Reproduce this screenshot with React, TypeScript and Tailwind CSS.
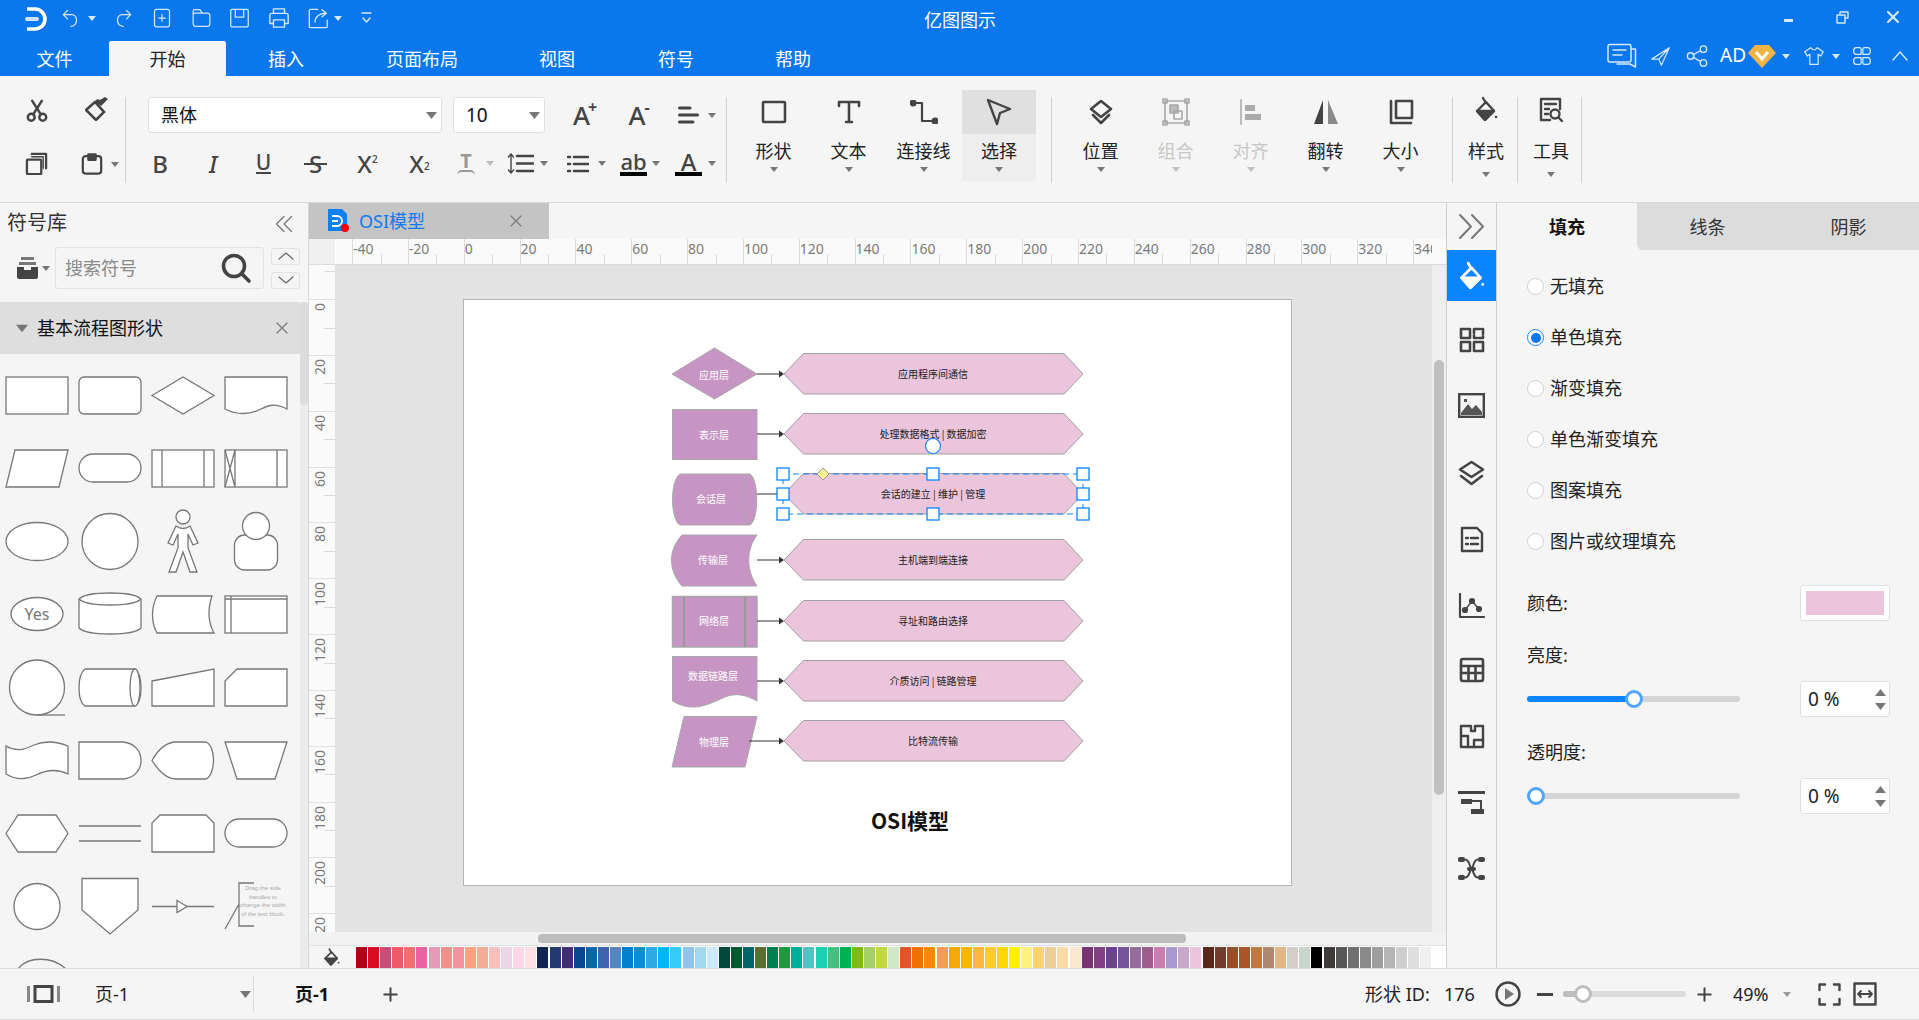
import type { ReactNode } from "react";

const swatches = [
  "#b10019", "#d80d25", "#c84f78", "#ed5a6a", "#ef7073", "#e864a0", "#e59ab8", "#ef928c", "#f4939e", "#ffa27f", "#f2ad97", "#f7c0bd", "#ead8e9", "#fdd7e6", "#fde0e6",
  "#112350", "#23396f", "#412c7a", "#0a478e", "#0368a5", "#3f64ad", "#5486c4", "#0280ce", "#0c8ece", "#2faae2", "#00b8f4", "#35caf7", "#8fc4ec", "#a2d9ef", "#ceeaf6",
  "#04483a", "#01592f", "#026565", "#5b6d31", "#007f50", "#1f9840", "#01ae9a", "#54c1c4", "#1bcfb0", "#47bd80", "#01b050", "#7fba10", "#a6cf66", "#c1d840", "#d1e8c8",
  "#e5532a", "#ef7106", "#f58b02", "#f59b5a", "#f4a904", "#ffb400", "#ffb83c", "#fecb2d", "#ffd700", "#fff000", "#fef17f", "#ffd36b", "#ecce96", "#fedaa6", "#fde7d0",
  "#7b3272", "#833f83", "#684095", "#75549b", "#956ba0", "#9f5c8f", "#ca7db0", "#a897d0", "#c7a8cc", "#ecc5dc",
  "#5b2618", "#743b2f", "#944f2b", "#ab5629", "#bf7a3f", "#b1886d", "#e0b887", "#d5cdc7", "#c9d4cc",
  "#000000", "#3e3a3a", "#575757", "#6f6f6f", "#898989", "#9f9f9f", "#b5b5b5", "#cecece", "#dfdfdf", "#f0f0f0",
];

const hRuler = [-40, -20, 0, 20, 40, 60, 80, 100, 120, 140, 160, 180, 200, 220, 240, 260, 280, 300, 320, 340];
const vRuler = [0, 20, 40, 60, 80, 100, 120, 140, 160, 180, 200, 20];

function Ic({ w = 24, h = 24, vb = "0 0 24 24", color = "#444", sw = 2.2, className = "", children }: { w?: number; h?: number; vb?: string; color?: string; sw?: number; className?: string; children: ReactNode }) {
  return (
    <svg width={w} height={h} viewBox={vb} fill="none" stroke={color} strokeWidth={sw} strokeLinecap="round" strokeLinejoin="round" className={`shrink-0 ${className}`}>
      {children}
    </svg>
  );
}

function Caret({ className = "", color = "#777", w = 8, h = 5 }: { className?: string; color?: string; w?: number; h?: number }) {
  return (
    <svg width={w} height={h} viewBox="0 0 8 5" className={`shrink-0 ${className}`}>
      <path d="M0 0H8L4 5Z" fill={color} />
    </svg>
  );
}

function Bucket({ color = "#444", w = 24, h = 26 }: { color?: string; w?: number; h?: number }) {
  return (
    <Ic w={w} h={h} vb="0 0 24 26" color={color} sw={2.4}>
      <path d="M9 2L12 7" />
      <path d="M12 6L20 15L11 24L3 15Z" />
      <path d="M3 15L20 15L11 24Z" fill={color} />
      <circle cx="22" cy="21" r="1.3" fill={color} stroke="none" />
    </Ic>
  );
}

function BigBtn({ label, icon, className = "", off = false, caretClass = "mt-[4px]", labelClass = "" }: { label: string; icon: ReactNode; className?: string; off?: boolean; caretClass?: string; labelClass?: string }) {
  return (
    <div className={`flex h-[91px] flex-col items-center ${className}`}>
      <div className="flex h-[44px] items-center justify-center">{icon}</div>
      <div className={`mt-[5px] text-[18px] leading-[24px] ${off ? "text-[#c8c8c8]" : "text-[#222]"} ${labelClass}`}>{label}</div>
      <Caret className={caretClass} color={off ? "#c0c0c0" : "#777"} />
    </div>
  );
}

function RibbonSep({ className = "" }: { className?: string }) {
  return <div className={`mt-[7px] h-[86px] w-px shrink-0 bg-[#d2d2d2] ${className}`} />;
}

function Glyph({ children, className = "" }: { children: ReactNode; className?: string }) {
  return <span className={`flex shrink-0 items-center justify-center font-medium leading-none text-[#444] ${className}`}>{children}</span>;
}

function Radio({ label, on = false }: { label: string; on?: boolean }) {
  return (
    <div className="flex h-[51px] items-center pl-[30px]">
      <span className={`flex h-[17px] w-[17px] items-center justify-center rounded-full border bg-white ${on ? "border-[#1a82ff]" : "border-[#cfcfcf]"}`}>
        {on && <span className="h-[10px] w-[10px] rounded-full bg-[#0a78ec]" />}
      </span>
      <span className="ml-[6px] text-[18px] text-[#222]">{label}</span>
    </div>
  );
}

function Spin() {
  return (
    <div className="flex h-[36px] w-[90px] shrink-0 items-center justify-between rounded-[3px] border border-[#e0e0e0] bg-white pl-[7px] pr-[3px]">
      <span className="text-[19px] text-[#222]">0 %</span>
      <div className="flex flex-col gap-[7px]">
        <Caret w={11} h={7} color="#777" className="rotate-180" />
        <Caret w={11} h={7} color="#777" />
      </div>
    </div>
  );
}

function Lib({ children }: { children: ReactNode }) {
  return (
    <svg width="73" height="73" viewBox="0 0 73 73" fill="#fff" stroke="#777" strokeWidth="1.3">
      {children}
    </svg>
  );
}

function Library() {
  return (
    <div className="grid grid-cols-[repeat(4,73px)] auto-rows-[73px] pt-[5px]">
      <Lib><rect x="6" y="18" width="62" height="37" /></Lib>
      <Lib><rect x="6" y="18" width="62" height="37" rx="5" /></Lib>
      <Lib><path d="M6 36.5L37 18L68 36.5L37 55Z" /></Lib>
      <Lib><path d="M6 18H68V50C56 44 50 46 42 50C30 56 18 56 6 50Z" /></Lib>

      <Lib><path d="M15 18H68L59 55H6Z" /></Lib>
      <Lib><rect x="6" y="22" width="62" height="28" rx="14" /></Lib>
      <Lib><rect x="6" y="18" width="62" height="37" /><path d="M16 18V55M58 18V55" /></Lib>
      <Lib><rect x="6" y="18" width="62" height="37" /><path d="M16 18V55M58 18V55M6 18L16 55M16 18L6 55" /></Lib>

      <Lib><ellipse cx="37" cy="36.5" rx="31" ry="19" /></Lib>
      <Lib><circle cx="37" cy="36.5" r="28" /></Lib>
      <Lib><circle cx="37" cy="12" r="7" /><path d="M30 21L22 38L27 40L32 29V43L23 67H30L37 47L44 67H51L42 43V29L47 40L52 38L44 21Q37 26 30 21Z" /></Lib>
      <Lib><rect x="15.5" y="30" width="43" height="35" rx="10" /><circle cx="37" cy="21" r="13.5" /></Lib>

      <Lib><ellipse cx="37" cy="36" rx="26" ry="16.5" /><text x="37" y="42" textAnchor="middle" fontSize="16" fill="#777" stroke="none" fontFamily="'Noto Sans',sans-serif">Yes</text></Lib>
      <Lib><path d="M6 21V50C14 58 60 58 68 50V21C60 13 14 13 6 21Z" /><path d="M6 21C14 29 60 29 68 21" /></Lib>
      <Lib><path d="M11 18H66C62 30 62 44 68 55H11C5 44 5 30 11 18Z" /></Lib>
      <Lib><rect x="6" y="18" width="62" height="37" /><path d="M12 18V55M6 21H68" /></Lib>

      <Lib><circle cx="37" cy="36.5" r="27.5" /><path d="M37 64H65" /></Lib>
      <Lib><path d="M12 18H62C70 24 70 50 62 55H12C4 50 4 24 12 18Z" /><ellipse cx="62" cy="36.5" rx="5" ry="18.5" /></Lib>
      <Lib><path d="M6 30L68 18V55H6Z" /></Lib>
      <Lib><path d="M18 18H68V55H6V30Z" /></Lib>

      <Lib><path d="M6 22C16 28 24 26 34 21C46 16 58 18 68 22V50C56 44 46 46 36 51C26 56 16 56 6 50Z" /></Lib>
      <Lib><path d="M6 18H50C74 20 74 53 50 55H6Z" /></Lib>
      <Lib><path d="M6 36.5C12 26 20 18 30 18H60C70 22 70 50 60 55H30C20 55 12 46 6 36.5Z" /></Lib>
      <Lib><path d="M6 18H68L56 55H18Z" /></Lib>

      <Lib><path d="M6 36.5L18 18H56L68 36.5L56 55H18Z" /></Lib>
      <Lib><path d="M6 29H68M6 44H68" /></Lib>
      <Lib><path d="M14 18H60L68 26V55H6V26Z" /></Lib>
      <Lib><rect x="6" y="22" width="62" height="28" rx="14" /></Lib>

      <Lib><circle cx="37" cy="36.5" r="23" /></Lib>
      <Lib><path d="M9 8.5H65V40L37 64L9 40Z" /></Lib>
      <Lib><path d="M6 36.5H68" /><path d="M31 30.5L41 36.5L31 42.5Z" /></Lib>
      <svg width="73" height="73" viewBox="0 0 73 73" fill="none" stroke="#777" strokeWidth="1.3">
        <path d="M35 13H20V56H35M20 34L6 59" />
        <g fill="#aaa" stroke="none" fontSize="6" textAnchor="middle" fontFamily="'Liberation Sans',sans-serif">
          <text x="44" y="20">Drag the side</text>
          <text x="44" y="29">handles to</text>
          <text x="44" y="37">change the width</text>
          <text x="44" y="46">of the text block.</text>
        </g>
      </svg>

      <Lib><path d="M18 26C28 13 52 13 66 26" fill="none" /></Lib>
    </div>
  );
}

const hexRows = [
  { y: 374, text: "应用程序间通信" },
  { y: 434, text: "处理数据格式 | 数据加密" },
  { y: 494, text: "会话的建立 | 维护 | 管理" },
  { y: 560, text: "主机端到端连接" },
  { y: 621, text: "寻址和路由选择" },
  { y: 681, text: "介质访问 | 链路管理" },
  { y: 741, text: "比特流传输" },
];

const nodeLabels = [
  { x: 714, y: 374, text: "应用层" },
  { x: 714, y: 434, text: "表示层" },
  { x: 711, y: 498, text: "会话层" },
  { x: 713, y: 559, text: "传输层" },
  { x: 714, y: 620, text: "网络层" },
  { x: 713, y: 675, text: "数据链路层" },
  { x: 714, y: 741, text: "物理层" },
];

const handles = [[783, 474], [933, 474], [1083, 474], [783, 494], [1083, 494], [783, 514], [933, 514], [1083, 514]];

function Diagram() {
  const fam = "'Noto Sans CJK SC',sans-serif";
  return (
    <svg width="829" height="587" viewBox="463 299 829 587" className="block">
      <g fill="#c795c4" stroke="#a8a8a8" strokeWidth="1">
        <path d="M672 374L714.5 348L757 374L714.5 399Z" />
        <rect x="672.5" y="409.5" width="84.5" height="50" />
        <path d="M680 474H750C759 480 759 519 750 525H680C670 519 670 480 680 474Z" />
        <path d="M750 474C741 480 741 519 750 525" fill="none" />
        <path d="M682 535H757C746 550 746 570 757 586H682C668 570 668 550 682 535Z" />
        <rect x="672.5" y="596.5" width="84.5" height="50.5" strokeWidth="1.5" />
        <path d="M684 597V647M745 597V647" stroke="#999" strokeWidth="2" />
        <path d="M672.5 656.5H757V701C745 694 735 693 725 697C712 703 703 707 693 707C684 707 678 704 672.5 701Z" />
        <path d="M684 716.5H757L745 767H672Z" />
      </g>
      <g stroke="#333" strokeWidth="1">
        <path d="M757 374H780M757 434H780M757 494H778M757 560H780M757 621H780M757 681H780M749 741H780" />
      </g>
      <g fill="#333">
        {[374, 434, 560, 621, 681, 741].map((y) => (
          <path key={y} d={`M779 ${y - 3.5}L784 ${y}L779 ${y + 3.5}Z`} />
        ))}
      </g>
      <g fill="#ebc5dc" stroke="#a0a0a0" strokeWidth="1">
        {[374, 434, 494, 560, 621, 681, 741].map((y) => (
          <path key={y} d={`M784 ${y}L803.5 ${y - 20.5}H1064L1083 ${y}L1064 ${y + 20}H803.5Z`} />
        ))}
      </g>
      <g fontSize="10" textAnchor="middle" dominantBaseline="central" fontFamily={fam}>
        {hexRows.map((r) => (
          <text key={r.y} x="933" y={r.y - 1} fill="#222">{r.text}</text>
        ))}
        {nodeLabels.map((n) => (
          <text key={n.text} x={n.x} y={n.y} fill="#fff">{n.text}</text>
        ))}
      </g>
      <rect x="783" y="474" width="300" height="40" fill="none" stroke="#0a84ff" strokeWidth="1" strokeDasharray="6 4" />
      <path d="M823 468L829 474L823 480L817 474Z" fill="#fdf58f" stroke="#999" />
      {handles.map(([x, y]) => (
        <rect key={`${x}-${y}`} x={x - 6} y={y - 6} width="12" height="12" fill="#fff" stroke="#0a84ff" strokeWidth="1.3" />
      ))}
      <circle cx="933" cy="446" r="7.5" fill="#fff" stroke="#1a82ff" strokeWidth="1.2" />
      <text x="910" y="820" textAnchor="middle" dominantBaseline="central" fontSize="21" fontWeight="700" fill="#111" fontFamily={fam}>OSI模型</text>
    </svg>
  );
}

export default function App() {
  const light = "#d6e8fc";
  return (
    <div className="flex h-[1020px] w-[1919px] flex-col overflow-hidden bg-[#f5f5f5] [font-family:'Noto_Sans','Noto_Sans_CJK_SC',sans-serif]">
      {/* title bar */}
      <div className="h-[76px] shrink-0 bg-[#0a78ec]">
        <div className="flex h-[41px] items-start">
          <svg width="22" height="24" viewBox="0 0 22 24" fill="none" className="ml-[25px] mt-[7px] shrink-0">
            <path d="M2 2H10A10 10 0 0 1 10 22H2" stroke="#fff" strokeWidth="3.6" />
            <path d="M2 12H12" stroke="#cfe4fb" strokeWidth="4" strokeLinecap="round" />
          </svg>
          <Ic w={20} h={20} color={light} sw={1.5} className="ml-[13px] mt-[8px]"><path d="M9 3L4 8L9 13M4 8H14C22 8 22 21 13 22" /></Ic>
          <Caret color={light} className="ml-[8px] mt-[16px]" />
          <Ic w={20} h={20} color={light} sw={1.5} className="ml-[18px] mt-[8px]"><path d="M15 3L20 8L15 13M20 8H10C2 8 2 21 11 22" /></Ic>
          <Ic w={20} h={20} color={light} sw={1.5} className="ml-[18px] mt-[8px]"><rect x="3" y="1.5" width="18" height="21" rx="2.5" /><path d="M12 8V16M8 12H16" /></Ic>
          <Ic w={23} h={20} color={light} sw={1.5} className="ml-[18px] mt-[8px]"><path d="M2 6V19Q2 22 5 22H19Q22 22 22 19V9Q22 6 19 6H2ZM2 6V4Q2 2 4 2H10L13 6" /></Ic>
          <Ic w={21} h={20} color={light} sw={1.5} className="ml-[16px] mt-[8px]"><path d="M3 1.5H21Q22.5 1.5 22.5 3V21Q22.5 22.5 21 22.5H3Q1.5 22.5 1.5 21V3Q1.5 1.5 3 1.5Z" /><path d="M7 2V11H17V2" /></Ic>
          <Ic w={24} h={22} color={light} sw={1.5} className="ml-[17px] mt-[7px]"><path d="M6 7V2H18V7M6 18H2V9Q2 7 4 7H20Q22 7 22 9V18H18M6 14H18V22H6Z" /></Ic>
          <Ic w={23} h={21} color={light} sw={1.5} className="ml-[16px] mt-[8px]"><path d="M22 14V21Q22 22.5 20 22.5H3Q1.5 22.5 1.5 21V3Q1.5 1.5 3 1.5H11M8 16C8 10 13 6 20 6M16 2L21 6L16 10" /></Ic>
          <Caret color={light} className="ml-[4px] mt-[16px]" />
          <Ic w={11} h={16} vb="0 0 11 16" color={light} sw={1.4} className="ml-[19px] mt-[11px]"><path d="M1 2H10M2 7L5.5 11L9 7" /></Ic>
          <div className="ml-[552px] mt-[7px] w-[72px] text-[18px] leading-[26px] text-white">亿图图示</div>
          <div className="ml-auto mr-[20px] flex items-start">
            <div className="mt-[19px] h-[3px] w-[9px] bg-[#d6e8fc]" />
            <Ic w={13} h={13} vb="0 0 13 13" color={light} sw={1.4} className="ml-[43px] mt-[11px]"><path d="M4 3V1H12V7H9" /><rect x="1" y="4" width="8" height="8" /></Ic>
            <Ic w={12} h={12} vb="0 0 12 12" color={light} sw={2.2} className="ml-[38px] mt-[11px]"><path d="M1 1L11 11M11 1L1 11" /></Ic>
          </div>
        </div>
        <div className="flex h-[35px] items-stretch text-[18px] text-white">
          <div className="flex w-[109px] items-center justify-center pt-px">文件</div>
          <div className="flex w-[117px] items-center justify-center rounded-t-[2px] bg-[#f5f5f5] pt-px text-[#222]">开始</div>
          <div className="flex w-[120px] items-center justify-center pt-px">插入</div>
          <div className="flex w-[152px] items-center justify-center pt-px">页面布局</div>
          <div className="flex w-[118px] items-center justify-center pt-px">视图</div>
          <div className="flex w-[120px] items-center justify-center pt-px">符号</div>
          <div className="flex w-[114px] items-center justify-center pt-px">帮助</div>
          <div className="ml-auto mr-[11px] flex items-center">
            <Ic w={30} h={26} vb="0 0 30 26" color={light} sw={1.5} className="mb-[6px]"><path d="M3 1.5H22Q24 1.5 24 3.5V17Q24 19 22 19H8L3 19Q1 19 1 17V3.5Q1 1.5 3 1.5ZM25 6H28.5V24L23 21H10M6 7H19M6 12H15" /></Ic>
            <Ic w={21} h={21} color={light} sw={1.4} className="mb-[5px] ml-[13px]"><path d="M22 2L2 15L10 15L13 22ZM22 2L10 15" /></Ic>
            <Ic w={22} h={22} color={light} sw={1.5} className="mb-[5px] ml-[15px]"><circle cx="5" cy="12" r="3.5" /><circle cx="19" cy="4.5" r="3.5" /><circle cx="19" cy="19.5" r="3.5" /><path d="M8 10.5L16 6M8 13.5L16 18" /></Ic>
            <span className="mb-[6px] ml-[12px] w-[28px] text-[19px] leading-none">AD</span>
            <svg width="28" height="24" viewBox="0 0 28 24" className="mb-[5px] shrink-0">
              <path d="M7 1H21L28 9L14 24L0 9Z" fill="#f2b544" />
              <path d="M8 8L14 15L20 8" fill="none" stroke="#fff" strokeWidth="3" />
            </svg>
            <Caret color={light} className="mb-[4px] ml-[6px]" />
            <Ic w={24} h={20} color={light} sw={1.5} className="mb-[5px] ml-[12px]"><path d="M8 2L1 7L4 12L7 10V22H17V10L20 12L23 7L16 2Q12 7 8 2Z" /></Ic>
            <Caret color={light} className="mb-[4px] ml-[6px]" />
            <Ic w={20} h={20} color={light} sw={1.5} className="mb-[5px] ml-[12px]"><path d="M5 2H9Q11 2 11 4V10H5Q2 10 2 6Q2 2 5 2ZM19 2H15Q13 2 13 4V10H19Q22 10 22 6Q22 2 19 2ZM5 22H9Q11 22 11 20V14H5Q2 14 2 18Q2 22 5 22ZM19 22H15Q13 22 13 20V14H19Q22 14 22 18Q22 22 19 22Z" /></Ic>
            <Ic w={16} h={10} vb="0 0 16 10" color={light} sw={1.4} className="mb-[6px] ml-[20px]"><path d="M1 9L8 1L15 9" /></Ic>
          </div>
        </div>
      </div>

      {/* ribbon */}
      <div className="flex h-[127px] shrink-0 items-start border-b border-[#d8d8d8] pt-[14px]">
        <div className="w-[125px] shrink-0">
          <div className="mt-[7px] flex h-[36px] items-start">
            <Ic w={24} h={23} sw={2.6} className="ml-[25px] mt-[2px]"><circle cx="6" cy="19" r="3.6" /><circle cx="18" cy="19" r="3.6" /><path d="M8 16L17 2M16 16L7 2" /></Ic>
            <svg width="24" height="24" viewBox="0 0 24 24" className="ml-[36px] shrink-0">
              <path d="M1 13L10 5L19 15L11 23Z" fill="none" stroke="#444" strokeWidth="2.6" />
              <path d="M10 5L16 9L23 2L20 0L15 3L12 2Z" fill="#444" />
            </svg>
          </div>
          <div className="mt-[19px] flex items-center">
            <Ic w={23} h={23} sw={2.4} className="ml-[25px]"><rect x="2" y="8" width="15" height="15" rx="1" /><path d="M7 2H22V17" /><path d="M7 5H19V17" strokeWidth="1.4" /></Ic>
            <Ic w={22} h={23} sw={2.4} className="ml-[33px]"><rect x="2" y="4" width="20" height="19" rx="3" /><path d="M8 8V2H16V8Z" fill="#444" /></Ic>
            <Caret className="ml-[8px] mt-[2px]" />
          </div>
        </div>
        <RibbonSep />
        <div className="w-[600px] shrink-0">
          <div className="mt-[7px] flex h-[36px] items-center">
            <div className="ml-[22px] flex h-[36px] w-[294px] shrink-0 items-center justify-between rounded-[3px] border border-[#e0e0e0] bg-white pl-[12px] pr-[4px] text-[18px] text-[#111]">
              <span>黑体</span>
              <Caret w={11} h={7} color="#777" />
            </div>
            <div className="ml-[11px] flex h-[36px] w-[92px] shrink-0 items-center justify-between rounded-[3px] border border-[#e0e0e0] bg-white pl-[12px] pr-[4px] text-[19px] text-[#111]">
              <span>10</span>
              <Caret w={11} h={7} color="#777" />
            </div>
            <Glyph className="ml-[28px] w-[24px] text-[26px]">A<sup className="-ml-[2px] text-[16px] font-bold">+</sup></Glyph>
            <Glyph className="ml-[30px] w-[24px] text-[26px]">A<sup className="-ml-[1px] text-[16px] font-bold">-</sup></Glyph>
            <Ic w={21} h={18} vb="0 0 21 18" sw={3} className="ml-[27px]"><path d="M1.5 2H12M1.5 9H19.5M1.5 16H15" /></Ic>
            <Caret className="ml-[9px]" />
          </div>
          <div className="mt-[19px] flex h-[23px] items-center">
            <Glyph className="ml-[26px] w-[16px] text-[24px]">B</Glyph>
            <Glyph className="ml-[37px] w-[16px] text-[24px] italic">I</Glyph>
            <span className="ml-[35px] flex w-[15px] shrink-0 flex-col items-center text-[21px] font-medium leading-[19px] text-[#444]">U<span className="h-[2px] w-[15px] bg-[#444]" /></span>
            <span className="relative ml-[33px] flex w-[23px] shrink-0 justify-center text-[24px] font-medium leading-none text-[#444]">S<span className="absolute left-0 top-[11px] h-[2px] w-[23px] bg-[#444]" /></span>
            <Glyph className="ml-[28px] w-[25px] text-[24px]">X<sup className="text-[10px]">2</sup></Glyph>
            <Glyph className="ml-[27px] w-[25px] text-[24px]">X<sub className="text-[10px]">2</sub></Glyph>
            <span className="relative ml-[25px] flex h-[23px] w-[18px] shrink-0 justify-center text-[20px] font-bold leading-[17px] text-[#999]">T<span className="absolute bottom-0 left-0 h-[5px] w-[18px] rounded-t-full border-t-2 border-[#999]" /></span>
            <Caret color="#bbb" className="ml-[11px]" />
            <Ic w={27} h={21} vb="0 0 27 21" sw={2.6} className="ml-[13px]"><path d="M4 1V20M1.5 4L4 1L6.5 4M1.5 17L4 20L6.5 17" strokeWidth="1.4" /><path d="M10 3H26M10 10.5H26M10 18H26" /></Ic>
            <Caret className="ml-[6px]" />
            <Ic w={22} h={18} vb="0 0 22 18" sw={2.6} className="ml-[19px]"><path d="M1 2H3M7 2H21M1 9H3M7 9H21M1 16H3M7 16H21" /></Ic>
            <Caret className="ml-[9px]" />
            <span className="ml-[14px] flex w-[27px] shrink-0 flex-col items-center text-[22px] font-medium leading-[19px] text-[#444]">ab<span className="mt-px h-[4px] w-[27px] bg-black" /></span>
            <Caret className="ml-[5px]" />
            <span className="ml-[15px] flex w-[27px] shrink-0 flex-col items-center text-[24px] font-medium leading-[19px] text-[#444]">A<span className="mt-px h-[4px] w-[27px] bg-black" /></span>
            <Caret className="ml-[6px]" />
          </div>
        </div>
        <RibbonSep />
        <div className="ml-[9px] flex">
          <BigBtn className="w-[75px]" label="形状" icon={<Ic w={26} h={24} vb="0 0 26 24" sw={2.6}><rect x="2" y="2" width="22" height="20" rx="1" /></Ic>} />
          <BigBtn className="w-[75px]" label="文本" icon={<Ic w={24} h={24} sw={2.6}><path d="M2 6V2H22V6M12 2V22M9 22H15" /></Ic>} />
          <BigBtn className="w-[75px]" label="连接线" icon={<Ic w={28} h={24} vb="0 0 28 24" sw={2.2}><circle cx="3" cy="3" r="2.4" fill="#444" /><circle cx="25" cy="21" r="2.4" fill="#444" /><path d="M5 3H12V21H23" /></Ic>} />
          <div className="relative ml-px h-[91px] w-[74px]">
            <div className="flex h-[44px] items-center justify-center bg-[#e0e0e0]">
              <Ic w={26} h={28} vb="0 0 26 28" sw={2.4}><path d="M2 2L24 11L14 15L11 26Z" /></Ic>
            </div>
            <div className="flex h-[47px] flex-col items-center bg-[#eeeeee] pt-[5px]">
              <div className="text-[18px] leading-[24px] text-[#222]">选择</div>
              <Caret className="mt-[4px]" />
            </div>
          </div>
        </div>
        <RibbonSep className="ml-[15px]" />
        <div className="ml-[11px] flex">
          <BigBtn className="w-[75px]" label="位置" icon={<Ic w={26} h={26} vb="0 0 26 26" sw={2.6}><path d="M13 2L23 10L13 18L3 10Z" /><path d="M5 16L13 24L21 16" /></Ic>} />
          <BigBtn className="w-[75px]" label="组合" off icon={<Ic w={28} h={28} vb="0 0 28 28" color="#a8a8a8" sw={1.6}><rect x="3" y="3" width="22" height="22" /><rect x="8" y="7" width="8" height="8" fill="#bbb" /><rect x="12" y="13" width="8" height="8" /><path d="M1 1H5V5H1ZM23 1H27V5H23ZM1 23H5V27H1ZM23 23H27V27H23Z" /></Ic>} />
          <BigBtn className="w-[75px]" label="对齐" off icon={<Ic w={24} h={26} vb="0 0 24 26" color="#bbb" sw={2}><path d="M2 1V25" /><rect x="6" y="6" width="10" height="6" fill="#aaa" stroke="none" /><rect x="6" y="15" width="16" height="6" fill="#aaa" stroke="none" /></Ic>} />
          <BigBtn className="w-[75px]" label="翻转" icon={<svg width="28" height="26" viewBox="0 0 28 26"><path d="M11 1L2 25H11Z" fill="#444" /><path d="M16 1L26 25H16Z" fill="#8a8a8a" /></svg>} />
          <BigBtn className="w-[75px]" label="大小" icon={<Ic w={26} h={26} vb="0 0 26 26" sw={2.6}><path d="M3 2V24H23" /><rect x="8" y="2" width="16" height="17" /></Ic>} />
        </div>
        <RibbonSep className="ml-[14px]" />
        <BigBtn className="ml-[9px] w-[48px]" label="样式" caretClass="mt-[9px]" labelClass="-mt-px" icon={<div className="-mt-[7px]"><Bucket /></div>} />
        <RibbonSep className="ml-[7px]" />
        <BigBtn className="ml-[9px] w-[48px]" label="工具" caretClass="mt-[9px]" labelClass="-mt-px" icon={<div className="-mt-[5px]"><Ic w={26} h={26} vb="0 0 26 26" sw={2.4}><path d="M12 23H3V2H22V12" /><path d="M7 7H18M7 12H11M7 17H10" /><circle cx="17" cy="17" r="4.5" /><path d="M20.5 20.5L24 24" /></Ic></div>} />
        <RibbonSep className="ml-[6px]" />
      </div>

      {/* body */}
      <div className="flex h-[765px] shrink-0 overflow-hidden">
        {/* symbol library */}
        <div className="flex w-[309px] shrink-0 flex-col border-r border-[#d8d8d8]">
          <div className="flex h-[44px] shrink-0 items-center justify-between pb-[4px] pl-[7px] pr-[14px]">
            <span className="text-[20px] text-[#333]">符号库</span>
            <Ic w={20} h={20} color="#777" sw={1.5} className="mt-[2px]"><path d="M12 3L3 12L12 21M21 3L12 12L21 21" /></Ic>
          </div>
          <div className="flex h-[42px] shrink-0 items-center">
            <svg width="21" height="22" viewBox="0 0 21 22" className="ml-[17px] shrink-0">
              <path d="M4 0H17V3H4ZM2 5H19V8H2Z" fill="#777" />
              <path d="M0 10H21V20Q21 22 19 22H2Q0 22 0 20ZM7 10V13H14V10Z" fill="#444" />
            </svg>
            <Caret className="ml-[4px]" />
            <div className="ml-[5px] flex h-[42px] w-[209px] shrink-0 items-center justify-between rounded-[3px] border border-[#e2e2e2] pl-[9px] pr-[11px]">
              <span className="text-[18px] text-[#8a8a8a]">搜索符号</span>
              <Ic w={32} h={32} vb="0 0 32 32" color="#444" sw={3.6}><circle cx="14" cy="14" r="10.5" /><path d="M22 22L29 29" /></Ic>
            </div>
            <div className="ml-[7px] flex flex-col gap-[7px]">
              <div className="flex h-[17px] w-[29px] items-center justify-center rounded-[3px] border border-[#e2e2e2]">
                <Ic w={16} h={8} vb="0 0 16 8" color="#666" sw={1.2}><path d="M1 7L8 1L15 7" /></Ic>
              </div>
              <div className="flex h-[17px] w-[29px] items-center justify-center rounded-[3px] border border-[#e2e2e2]">
                <Ic w={16} h={8} vb="0 0 16 8" color="#666" sw={1.2}><path d="M1 1L8 7L15 1" /></Ic>
              </div>
            </div>
          </div>
          <div className="mt-[13px] flex min-h-0 flex-1">
            <div className="w-[300px] shrink-0 overflow-hidden">
              <div className="flex h-[52px] items-center bg-[#dedede]">
                <Caret w={12} h={9} color="#777" className="ml-[16px]" />
                <span className="ml-[9px] text-[18px] text-[#111]">基本流程图形状</span>
                <Ic w={12} h={12} color="#777" sw={2.4} className="ml-auto mr-[12px]"><path d="M2 2L22 22M22 2L2 22" /></Ic>
              </div>
              <Library />
            </div>
            <div className="flex-1 bg-[#ececec]">
              <div className="h-[103px] rounded-[4px] bg-[#dcdcdc]" />
            </div>
          </div>
        </div>

        {/* centre */}
        <div className="flex w-[1137px] shrink-0 flex-col">
          <div className="flex h-[36px] shrink-0">
            <div className="flex w-[240px] items-center bg-[#c4c4c4] pl-[18px]">
              <svg width="22" height="24" viewBox="0 0 22 24" className="shrink-0">
                <path d="M1 0H15L20 5V22H1Z" fill="#0f80f0" />
                <path d="M5 7H10A5 5 0 0 1 10 17H5M5 12H11" fill="none" stroke="#fff" strokeWidth="1.8" />
                <circle cx="18" cy="19" r="4" fill="#f40000" />
              </svg>
              <span className="ml-[10px] text-[18px] text-[#0f7bf0]">OSI模型</span>
              <Ic w={12} h={12} color="#777" sw={2.2} className="ml-auto mr-[27px]"><path d="M2 2L22 22M22 2L2 22" /></Ic>
            </div>
          </div>
          <div className="flex h-[26px] shrink-0 border-b border-[#dcdcdc] bg-[#fafafa]">
            <div className="w-[26px] shrink-0 bg-[#f0f0f0]" />
            <div className="flex w-[1097px] shrink-0 overflow-hidden">
              <div className="relative w-[17px] shrink-0" />
              {hRuler.map((n) => (
                <div key={n} className="relative w-[55.85px] shrink-0 overflow-hidden border-l border-[#dcdcdc] text-[14px] leading-[20px] text-[#7a7a7a]">
                  {n}
                  <span className="absolute bottom-0 left-[27.5px] h-[10px] w-px bg-[#dcdcdc]" />
                </div>
              ))}
            </div>
          </div>
          <div className="flex h-[667px] shrink-0">
            <div className="w-[26px] shrink-0 overflow-hidden bg-[#fafafa]">
              <div className="relative h-[34px]">
                <span className="absolute right-0 top-[6px] h-px w-[11px] bg-[#dcdcdc]" />
              </div>
              {vRuler.map((n, i) => (
                <div key={i} className="relative h-[55.85px] border-t border-[#e0e0e0] pl-[2px] pt-[3px]">
                  <span className="block rotate-180 text-[14px] leading-[18px] text-[#7a7a7a] [writing-mode:vertical-rl]">{n}</span>
                  <span className="absolute right-0 top-[27.5px] h-px w-[11px] bg-[#dcdcdc]" />
                </div>
              ))}
            </div>
            <div className="w-[1097px] shrink-0 overflow-hidden bg-[#e3e3e3] pl-[128px] pt-[34px]">
              <div className="h-[587px] w-[829px] border border-[#b4b4b4] bg-white">
                <div className="-ml-px -mt-px">
                  <Diagram />
                </div>
              </div>
            </div>
            <div className="w-[14px] shrink-0 bg-[#eeeeee] pl-[2px] pt-[95px]">
              <div className="h-[435px] w-[10px] rounded-[5px] bg-[#c0c0c0]" />
            </div>
          </div>
          <div className="flex h-[13px] shrink-0 items-center bg-[#f2f2f2] pl-[229px]">
            <div className="h-[9px] w-[648px] rounded-[4px] bg-[#bdbdbd]" />
          </div>
          <div className="flex h-[23px] shrink-0 items-center border-t border-[#e2e2e2] bg-white">
            <div className="flex h-[22px] w-[47px] shrink-0 items-center bg-[#f5f5f5] pl-[14px]">
              <Bucket w={17} h={20} />
            </div>
            <div className="flex h-[21px]">
              {swatches.map((c, i) => (
                <div key={i} className="mr-[1.1px] h-[21px] w-[11px] shrink-0" style={{ backgroundColor: c }} />
              ))}
            </div>
          </div>
        </div>

        {/* icon strip */}
        <div className="flex w-[51px] shrink-0 flex-col items-stretch border-x border-[#d0d0d0]">
          <div className="flex h-[47px] shrink-0 items-center justify-center">
            <Ic w={28} h={27} vb="0 0 28 27" color="#777" sw={2}><path d="M2 2L13 13.5L2 25M14 2L25 13.5L14 25" /></Ic>
          </div>
          <div className="flex h-[51px] shrink-0 items-center justify-center bg-[#0a84ff]">
            <Bucket color="#fff" w={27} h={29} />
          </div>
          <div className="flex flex-col items-center">
            <Ic w={26} h={26} vb="0 0 26 26" sw={2.6} className="mt-[26px]"><rect x="2" y="2" width="9" height="9" /><rect x="15" y="2" width="9" height="9" strokeDasharray="6 2" /><rect x="2" y="15" width="9" height="9" /><rect x="15" y="15" width="9" height="9" /></Ic>
            <svg width="27" height="25" viewBox="0 0 27 25" className="mt-[40px] shrink-0"><rect x="1.2" y="1.2" width="24.6" height="22.6" fill="none" stroke="#444" strokeWidth="2.4" /><path d="M3 20L10 11L14 16L18 12L24 19V22H3Z" fill="#555" /><rect x="6" y="6" width="3" height="3" fill="#555" /></svg>
            <Ic w={27} h={26} vb="0 0 27 26" sw={2.6} className="mt-[42px]"><path d="M13.5 2L25 9.5L13.5 17L2 9.5Z" /><path d="M3 16L13.5 24L24 16" /></Ic>
            <Ic w={24} h={27} vb="0 0 24 27" sw={2.4} className="mt-[40px]"><path d="M2 2H17L22 7V25H2Z" /><path d="M6 12H8M11 12H18M6 18H8M11 18H18" /></Ic>
            <Ic w={27} h={26} vb="0 0 27 26" sw={2.2} className="mt-[40px]"><path d="M2 1V24H26" /><path d="M7 17L14 8L21 16" strokeWidth="1.4" /><circle cx="7" cy="17" r="2" fill="#444" /><circle cx="14" cy="8" r="2" fill="#444" /><circle cx="21" cy="16" r="2" fill="#444" /></Ic>
            <Ic w={26} h={26} vb="0 0 26 26" sw={2.6} className="mt-[38px]"><rect x="2" y="2" width="22" height="22" rx="2" /><path d="M2 9H24M2 16H24M9.5 9V24M16.5 9V24" /></Ic>
            <Ic w={26} h={25} vb="0 0 26 25" sw={2.4} className="mt-[41px]"><path d="M2 2H12V7H16V2H24V23H2Z" /><path d="M2 12H9V23M15 23V16H24" /></Ic>
            <svg width="27" height="24" viewBox="0 0 27 24" className="mt-[42px] shrink-0"><path d="M0 0H27V3H0ZM3 8H14V13H3ZM13 18H26V23H13Z" fill="#444" /><path d="M14 10H23V18" fill="none" stroke="#444" strokeWidth="2" /></svg>
            <svg width="27" height="23" viewBox="0 0 27 23" className="mt-[42px] shrink-0"><rect x="0" y="0" width="7" height="5" rx="2" fill="#444" /><rect x="20" y="0" width="7" height="5" rx="2" fill="#444" /><rect x="0" y="18" width="7" height="5" rx="2" fill="#444" /><rect x="20" y="18" width="7" height="5" rx="2" fill="#444" /><rect x="9" y="10" width="9" height="4" rx="2" fill="#444" /><path d="M7 2.5C12 2.5 11 10 13.5 11.5C16 10 15 2.5 20 2.5M7 20.5C12 20.5 11 13 13.5 12.5C16 13 15 20.5 20 20.5" fill="none" stroke="#444" strokeWidth="2" /></svg>
          </div>
        </div>

        {/* format panel */}
        <div className="w-[422px] shrink-0">
          <div className="flex h-[47px] text-[18px]">
            <div className="flex w-[141px] items-center justify-center pt-px font-bold text-[#111]">填充</div>
            <div className="flex flex-1 rounded-bl-[6px] bg-[#dcdcdc] pt-[2px] text-[#333]">
              <div className="flex w-[141px] items-center justify-center">线条</div>
              <div className="flex w-[141px] items-center justify-center">阴影</div>
            </div>
          </div>
          <div className="pt-[11px]">
            <Radio label="无填充" />
            <Radio label="单色填充" on />
            <Radio label="渐变填充" />
            <Radio label="单色渐变填充" />
            <Radio label="图案填充" />
            <Radio label="图片或纹理填充" />
          </div>
          <div className="mt-[18px] flex h-[36px] items-center pl-[30px]">
            <span className="w-[273px] text-[18px] text-[#222]">颜色:</span>
            <div className="flex h-[36px] w-[90px] items-center justify-center rounded-[3px] border border-[#e0e0e0] bg-white">
              <div className="h-[24px] w-[78px] bg-[#ebc5dc]" />
            </div>
          </div>
          <div className="mt-[22px] pl-[30px] text-[18px] leading-[24px] text-[#222]">亮度:</div>
          <div className="mt-[14px] flex items-center pl-[30px]">
            <div className="relative h-[6px] w-[213px] rounded-full bg-[#d4d4d4]">
              <div className="h-[6px] w-[107px] rounded-full bg-[#0a84ff]" />
              <span className="absolute left-[98px] top-[-6px] h-[18px] w-[18px] rounded-full border-[3px] border-[#52a5ff] bg-white" />
            </div>
            <div className="ml-[60px]"><Spin /></div>
          </div>
          <div className="mt-[23px] pl-[30px] text-[18px] leading-[24px] text-[#222]">透明度:</div>
          <div className="mt-[14px] flex items-center pl-[30px]">
            <div className="relative h-[6px] w-[213px] rounded-full bg-[#d4d4d4]">
              <span className="absolute left-0 top-[-6px] h-[18px] w-[18px] rounded-full border-[3px] border-[#52a5ff] bg-white" />
            </div>
            <div className="ml-[60px]"><Spin /></div>
          </div>
        </div>
      </div>

      {/* status bar */}
      <div className="flex h-[52px] shrink-0 items-center border-y border-[#dcdcdc] text-[18px] text-[#222]">
        <svg width="33" height="18" viewBox="0 0 33 18" className="ml-[27px] shrink-0">
          <rect x="0" y="1" width="3" height="16" fill="#888" />
          <rect x="30" y="1" width="3" height="16" fill="#888" />
          <rect x="8" y="1.5" width="17" height="15" fill="none" stroke="#444" strokeWidth="3" />
        </svg>
        <span className="ml-[35px] w-[145px] shrink-0">页-1</span>
        <Caret w={11} h={7} color="#777" />
        <div className="ml-[2px] h-[36px] w-px bg-[#dcdcdc]" />
        <span className="ml-[41px] w-[50px] shrink-0 font-bold text-[#111]">页-1</span>
        <Ic w={15} h={15} color="#444" sw={3.2} className="ml-[38px]"><path d="M12 2V22M2 12H22" /></Ic>
        <span className="ml-[967px] w-[79px] shrink-0">形状 ID:</span>
        <span className="w-[31px] shrink-0">176</span>
        <svg width="26" height="26" viewBox="0 0 26 26" className="ml-[20px] shrink-0">
          <circle cx="13" cy="13" r="11.5" fill="none" stroke="#444" strokeWidth="2.4" />
          <path d="M10 7L19 13L10 19Z" fill="#777" />
        </svg>
        <div className="ml-[16px] h-[3px] w-[16px] shrink-0 bg-[#444]" />
        <div className="relative ml-[10px] h-[6px] w-[123px] shrink-0 rounded-full bg-[#dcdcdc]">
          <div className="h-[6px] w-[20px] rounded-full bg-[#bdbdbd]" />
          <span className="absolute left-[11px] top-[-6px] h-[18px] w-[18px] rounded-full border-[3px] border-[#bdbdbd] bg-white" />
        </div>
        <Ic w={15} h={15} color="#444" sw={3.2} className="ml-[11px]"><path d="M12 2V22M2 12H22" /></Ic>
        <span className="ml-[21px] w-[38px] shrink-0">49%</span>
        <Caret className="ml-[12px]" color="#999" />
        <Ic w={23} h={23} vb="0 0 23 23" sw={2.4} className="ml-[27px]"><path d="M1.5 7V1.5H7M16 1.5H21.5V7M21.5 16V21.5H16M7 21.5H1.5V16" /></Ic>
        <Ic w={24} h={24} vb="0 0 24 24" sw={2.4} className="ml-[12px]"><rect x="1.5" y="1.5" width="21" height="21" /><path d="M5 12H19M8 9L5 12L8 15M16 9L19 12L16 15" strokeWidth="1.8" /></Ic>
      </div>
    </div>
  );
}
